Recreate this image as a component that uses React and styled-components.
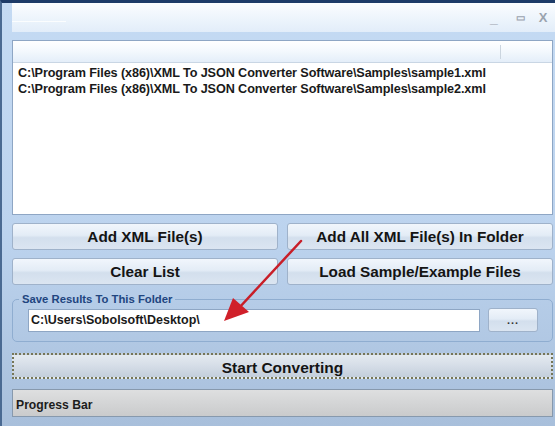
import * as React from "react";
import styled, {createGlobalStyle} from 'styled-components';

const GlobalStyles = createGlobalStyle`
  html, body {
    margin: 0;
    padding: 0;
    background: #c3d8ef;
  }
  body {
    font-family: "Liberation Sans", Arial, sans-serif;
  }
`;

const Window = styled.div`
  position: relative;
  width: 555px;
  height: 426px;
  box-sizing: border-box;
  overflow: hidden;
  border-top: 3px solid #1d3b68;
  border-left: 2px solid #4a6a92;
  padding: 0 2px 0 10px;
  background: linear-gradient(180deg, #c4daf3 0%, #bcd3ee 55%, #a8bfdb 100%);
  display: flex;
  flex-direction: column;
`;

const TitleBar = styled.div`
  height: 29px;
  margin-right: -2px;
  display: flex;
  align-items: center;
  justify-content: space-between;
  background: linear-gradient(180deg, #fbfdff 0%, #eef5fc 50%, #e2edf9 100%);
`;

const TitleStreak = styled.div`
  width: 54px;
  height: 1px;
  margin-top: 8px;
  background: #ffffff;
  opacity: 0.8;
`;

const Controls = styled.div`
  display: flex;
  align-items: center;
  padding-right: 2px;
  color: #9aa3ae;
`;

const ControlGlyph = styled.span`
  width: ${({w}) => w || 24}px;
  text-align: center;
  font-size: ${({size}) => size || 12}px;
  font-weight: bold;
  line-height: 1;
  margin-top: ${({drop}) => drop || 0}px;
`;

const FileList = styled.div`
  margin-top: 8px;
  height: 173px;
  border: 1px solid #8ea6c4;
  background: #ffffff;
  display: flex;
  flex-direction: column;
`;

const ListHeader = styled.div`
  height: 21px;
  flex-shrink: 0;
  border-bottom: 1px solid #c9d6e4;
  background: linear-gradient(180deg, #ffffff 0%, #f3f8fd 50%, #e4eef9 100%);
  position: relative;
`;

const HeaderDivider = styled.div`
  position: absolute;
  left: 487px;
  top: 4px;
  width: 1px;
  height: 14px;
  background: #cbd5df;
`;

const ListRows = styled.div`
  padding: 2px 0 0 5px;
`;

const ListRow = styled.div`
  font-size: 12.65px;
  font-weight: bold;
  color: #1a1a1a;
  line-height: 16px;
  white-space: nowrap;
  letter-spacing: -0.1px;
`;

const ButtonGrid = styled.div`
  margin-top: 8px;
  display: grid;
  grid-template-columns: 1fr 1fr;
  column-gap: 9px;
  row-gap: 8px;
`;

const ActionButton = styled.div`
  height: 27px;
  box-sizing: border-box;
  border: 1px solid #9fb2ca;
  border-radius: 3px;
  background: linear-gradient(180deg, #f1f6fc 0%, #e3ecf6 45%, #d3dfed 55%, #dbe5f1 100%);
  display: flex;
  align-items: center;
  justify-content: center;
  font-size: 15.3px;
  font-weight: bold;
  color: #141414;
`;

const GroupBox = styled.fieldset`
  margin: 8px 0 0 0;
  padding: 3px 14px 9px 15px;
  border: 1px solid #8fadd0;
  border-radius: 5px;
  display: flex;
  align-items: center;
  gap: 8px;
`;

const GroupLabel = styled.legend`
  padding: 0 3px;
  margin-left: -9px;
  font-size: 11.3px;
  font-weight: bold;
  color: #21457f;
`;

const PathBox = styled.div`
  flex: 1;
  height: 23px;
  box-sizing: border-box;
  border: 1px solid #8ea6c4;
  background: #ffffff;
  display: flex;
  align-items: center;
  padding-left: 2px;
  font-size: 12.5px;
  font-weight: bold;
  color: #1a1a1a;
`;

const BrowseButton = styled(ActionButton)`
  width: 50px;
  height: 24px;
  font-size: 11px;
  color: #333;
  letter-spacing: 1px;
`;

const StartButton = styled.div`
  margin-top: 11px;
  height: 26px;
  box-sizing: border-box;
  border: 2px dotted #767657;
  padding-top: 3px;
  background: linear-gradient(180deg, #e4eaf0 0%, #d5dde7 50%, #c3cedb 100%);
  display: flex;
  align-items: center;
  justify-content: center;
  font-size: 15.5px;
  font-weight: bold;
  color: #141414;
`;

const ProgressBar = styled.div`
  margin-top: 10px;
  height: 28px;
  box-sizing: border-box;
  border: 1px solid #8799ad;
  padding: 3px 0 0 3px;
  background: linear-gradient(180deg, #dedfe0 0%, #d4d5d6 50%, #cacbcc 100%);
  display: flex;
  align-items: center;
  font-size: 12.2px;
  font-weight: bold;
  color: #1c1c1c;
`;

const ArrowOverlay = styled.svg`
  position: absolute;
  left: 0;
  top: 0;
  pointer-events: none;
`;

const files = [
    'C:\\Program Files (x86)\\XML To JSON Converter Software\\Samples\\sample1.xml',
    'C:\\Program Files (x86)\\XML To JSON Converter Software\\Samples\\sample2.xml',
];

const App = () => {
    return (
        <>
            <GlobalStyles/>
            <Window>
                <TitleBar>
                    <TitleStreak/>
                    <Controls>
                        <ControlGlyph size={14} w={26}>_</ControlGlyph>
                        <ControlGlyph size={10} w={26}>▭</ControlGlyph>
                        <ControlGlyph size={13} w={20}>X</ControlGlyph>
                    </Controls>
                </TitleBar>

                <FileList>
                    <ListHeader>
                        <HeaderDivider/>
                    </ListHeader>
                    <ListRows>
                        {files.map((f) => (
                            <ListRow key={f}>{f}</ListRow>
                        ))}
                    </ListRows>
                </FileList>

                <ButtonGrid>
                    <ActionButton>Add XML File(s)</ActionButton>
                    <ActionButton>Add All XML File(s) In Folder</ActionButton>
                    <ActionButton>Clear List</ActionButton>
                    <ActionButton>Load Sample/Example Files</ActionButton>
                </ButtonGrid>

                <GroupBox>
                    <GroupLabel>Save Results To This Folder</GroupLabel>
                    <PathBox>C:\Users\Sobolsoft\Desktop\</PathBox>
                    <BrowseButton>...</BrowseButton>
                </GroupBox>

                <StartButton>Start Converting</StartButton>
                <ProgressBar>Progress Bar</ProgressBar>

                {/* red pointer drawn over the form */}
                <ArrowOverlay width="555" height="426" viewBox="0 0 555 426">
                    <line x1="299" y1="238" x2="236" y2="306" stroke="#c81e28" strokeWidth="2.5" strokeLinecap="round"/>
                    <polygon points="222,318 231,295 247,309" fill="#d0202a"/>
                </ArrowOverlay>
            </Window>
        </>
    );
};

export default App;
